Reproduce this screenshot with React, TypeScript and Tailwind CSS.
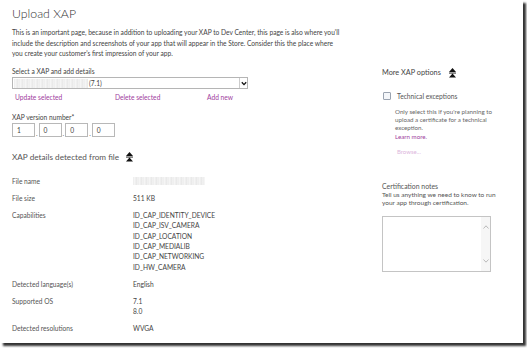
import React from "react";

const Arrows = () => (
  <svg width="7" height="10" viewBox="0 0 7 10" className="inline-block">
    <path d="M3.5 0 L7 4 H0 Z" fill="#111" />
    <rect x="0" y="4.6" width="7" height="0.9" fill="#111" />
    <path d="M3.5 5.6 L7 9.6 H0 Z" fill="#111" />
  </svg>
);

const Blur = ({ w, h }: { w: number; h: number }) => (
  <div
    className="bg-[repeating-linear-gradient(90deg,#ececec_0px,#f8f8f8_2px,#e6e6e6_3px,#f4f4f4_5px)]"
    style={{ width: w, height: h }}
  />
);

const Row = ({ label, values }: { label: string; values: React.ReactNode[] }) => (
  <div className="flex">
    <div className="w-[121px] text-[#555]">{label}</div>
    <div className="flex flex-col text-[#444]">
      {values.map((v, i) => (
        <div key={i}>{v}</div>
      ))}
    </div>
  </div>
);

export default function App() {
  return (
    <div
      className="w-[527px] h-[348px] bg-white overflow-hidden"
      style={{ fontFamily: "Lato, 'Open Sans', sans-serif" }}
    >
      <div className="w-[523px] h-[343px] bg-white shadow-[3px_3px_2px_rgba(0,0,0,0.8)] flex">
        {/* Left column */}
        <div className="w-[382px] shrink-0 pl-[12px] pt-[6px] text-[6.65px] text-[#444]">
          <div className="text-[12.3px] leading-[16px] font-light text-[#333]">Upload XAP</div>
          <div className="mt-[5px] leading-[10.5px]">
            This is an important page, because in addition to uploading your XAP to Dev Center, this page is also where you'll
            <br />
            include the description and screenshots of your app that will appear in the Store. Consider this the place where
            <br />
            you create your customer's first impression of your app.
          </div>
          <div className="mt-[7.5px] leading-[10px]">Select a XAP and add details</div>
          <div className="mt-[1px] w-[236px] h-[12px] border border-[#b5b5b5] flex items-center pl-[1px]">
            <Blur w={74} h={9} />
            <span className="ml-[1px] leading-[10px]">(7.1)</span>
            <div className="ml-auto w-[8px] h-[10px] border-l border-[#ccc] flex items-center justify-center">
              <svg width="6" height="5" viewBox="0 0 6 5">
                <path d="M0.8 1.2 L3 3.6 L5.2 1.2" stroke="#111" strokeWidth="1.3" fill="none" />
              </svg>
            </div>
          </div>
          <div className="mt-[3px] leading-[10px] flex text-[#a0409e] pl-[3px]">
            <span className="w-[100px]">Update selected</span>
            <span className="w-[92px]">Delete selected</span>
            <span>Add new</span>
          </div>
          <div className="mt-[10px] leading-[10px]">XAP version number*</div>
          <div className="mt-[1px] flex items-end gap-[1px]">
            {["1", "0", "0", "0"].map((v, i) => (
              <React.Fragment key={i}>
                {i > 0 && <span className="leading-[8px] text-[#666]">.</span>}
                <div className="w-[23px] h-[14px] border border-[#b8b8b8] flex items-center pl-[4px] leading-[10px]">
                  {v}
                </div>
              </React.Fragment>
            ))}
          </div>
          <div className="mt-[14px] leading-[12px] text-[8.2px] text-[#555] flex items-center">
            <span>XAP details detected from file</span>
            <span className="ml-[7px] flex items-center">
              <Arrows />
            </span>
          </div>
          <div className="mt-[12.8px] flex flex-col gap-[6.6px] leading-[10.4px]">
            <Row label="File name" values={[<div className="pt-[1px]"><Blur w={72} h={8} /></div>]} />
            <Row label="File size" values={["511 KB"]} />
            <Row
              label="Capabilities"
              values={[
                "ID_CAP_IDENTITY_DEVICE",
                "ID_CAP_ISV_CAMERA",
                "ID_CAP_LOCATION",
                "ID_CAP_MEDIALIB",
                "ID_CAP_NETWORKING",
                "ID_HW_CAMERA",
              ]}
            />
            <Row label="Detected language(s)" values={["English"]} />
            <Row label="Supported OS" values={["7.1", "8.0"]} />
            <Row label="Detected resolutions" values={["WVGA"]} />
          </div>
        </div>

        {/* Right column */}
        <div className="w-[141px] shrink-0 pt-[68px] text-[6.7px] text-[#444] whitespace-nowrap">
          <div className="leading-[10px] text-[7.3px] flex items-center">
            <span>More XAP options</span>
            <span className="ml-[8px] flex items-center">
              <Arrows />
            </span>
          </div>
          <div className="mt-[12.5px] leading-[10px] flex items-center">
            <div className="w-[8px] h-[8px] border border-[#9aa3b0] rounded-[1px] bg-[#f4f6f9] ml-[1px]" />
            <span className="ml-[6px] text-[#555]">Technical exceptions</span>
          </div>
          <div className="mt-[7.3px] pl-[13px] leading-[8.3px] text-[6.2px] text-[#666]">
            Only select this if you're planning to
            <br />
            upload a certificate for a technical
            <br />
            exception.
            <br />
            <span className="text-[#a0409e]">Learn more.</span>
          </div>
          <div className="mt-[6.7px] pl-[15px] leading-[8.4px] text-[6px] text-[#dcb6dc]">Browse...</div>
          <div className="mt-[24.8px] leading-[10px] text-[6.9px] text-[#555]">Certification notes</div>
          <div className="leading-[8.4px] text-[6.5px] text-[#555]">
            Tell us anything we need to know to run
            <br />
            your app through certification.
          </div>
          <div className="mt-[8.4px] w-[109px] h-[56px] border border-[#c4c4c4] flex justify-end">
            <div className="w-[9px] h-full bg-[#f6f6f6] flex flex-col items-center justify-between py-[8px]">
              <svg width="6" height="4" viewBox="0 0 6 4">
                <path d="M0.5 3.5 L3 0.8 L5.5 3.5" stroke="#aaa" strokeWidth="0.8" fill="none" />
              </svg>
              <svg width="6" height="4" viewBox="0 0 6 4">
                <path d="M0.5 0.5 L3 3.2 L5.5 0.5" stroke="#aaa" strokeWidth="0.8" fill="none" />
              </svg>
            </div>
          </div>
        </div>
      </div>
    </div>
  );
}
